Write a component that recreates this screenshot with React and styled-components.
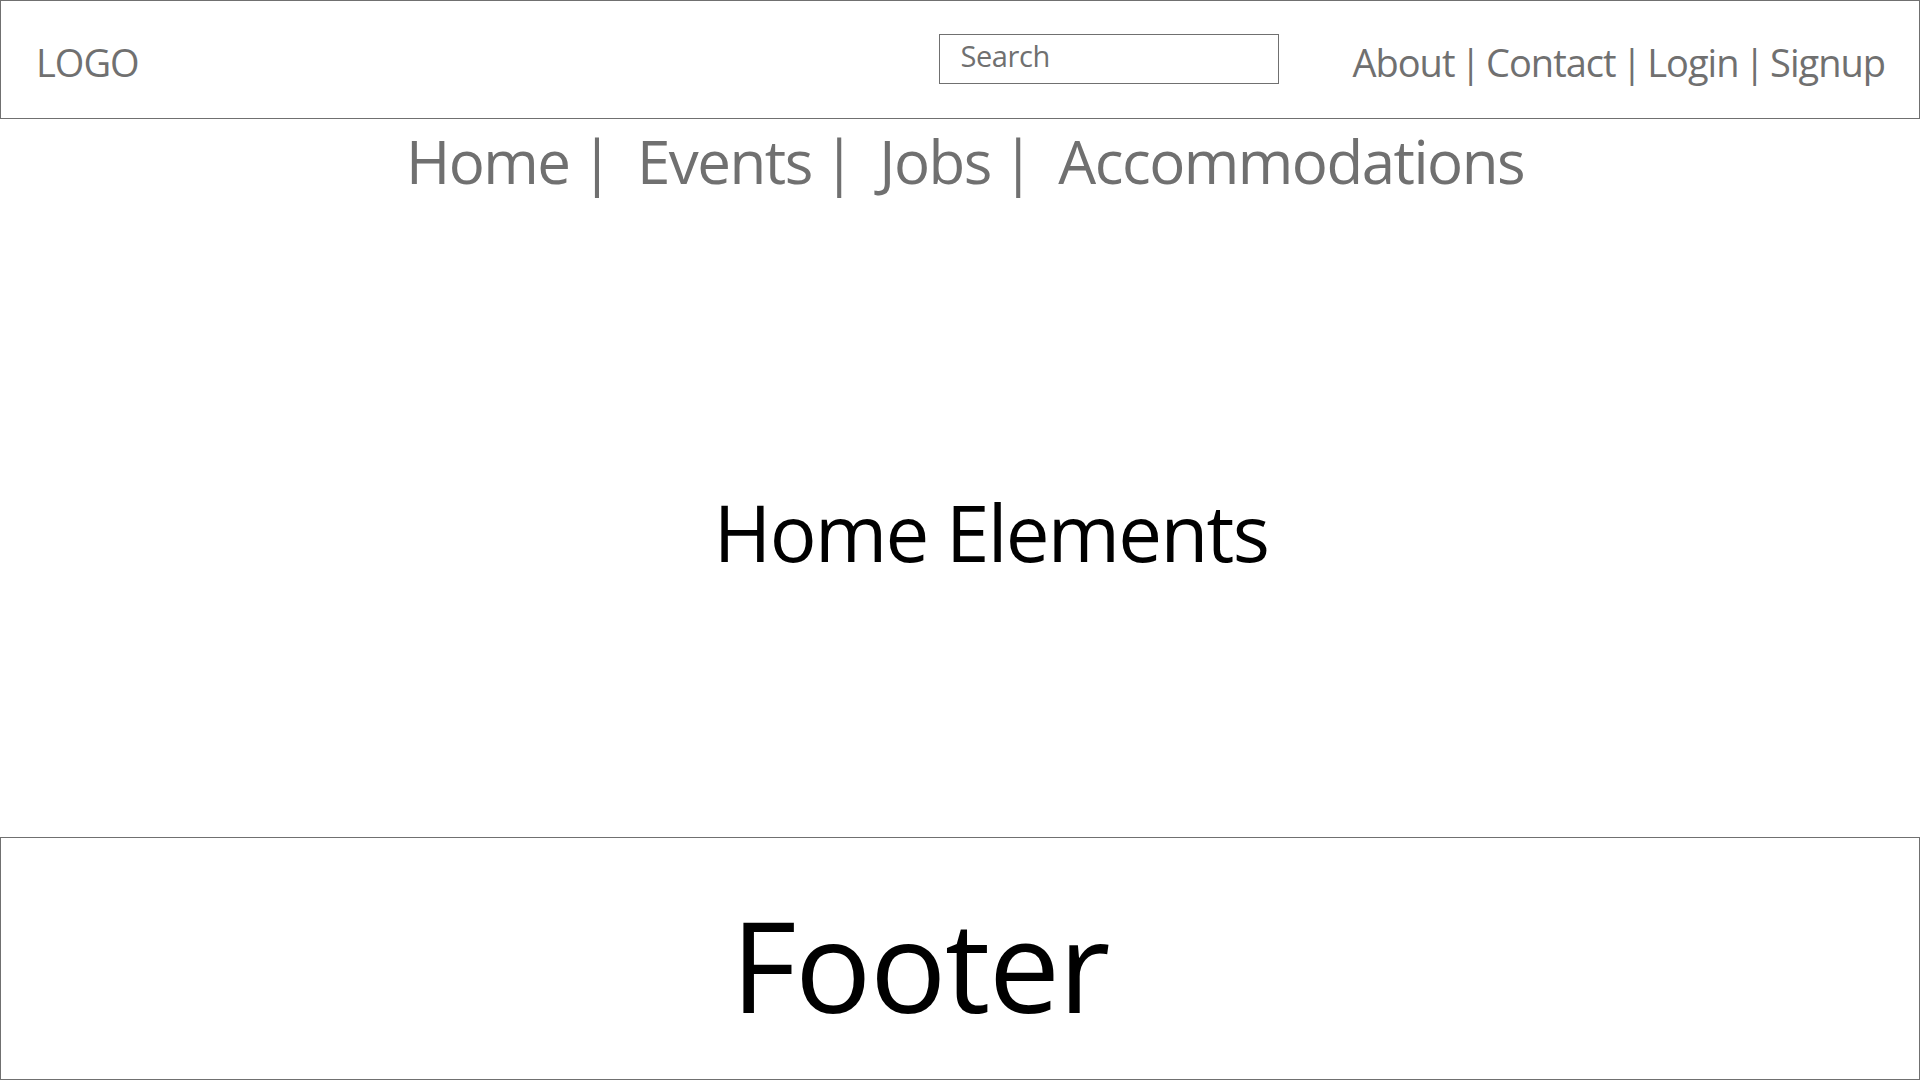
import React from 'react';
import styled, { createGlobalStyle } from 'styled-components';

const Global = createGlobalStyle`
  html, body { margin: 0; padding: 0; background: #ffffff; }
  body { font-family: "Open Sans", "Noto Sans", sans-serif; }
  * { box-sizing: border-box; }
`;

const Page = styled.div`
  width: 1920px;
  height: 1080px;
  display: flex;
  flex-direction: column;
  overflow: hidden;
  background: #ffffff;
`;

const Header = styled.header`
  flex-shrink: 0;
  height: 119px;
  border: 1px solid #707070;
  display: flex;
  align-items: center;
  padding: 0 34px 0 35px;
`;

const Logo = styled.div`
  font-size: 38px;
  color: #707070;
  letter-spacing: -1px;
  margin-top: 4px;
`;

const SearchInput = styled.input`
  margin-left: auto;
  margin-top: -1px;
  width: 340px;
  height: 50px;
  border: 1px solid #707070;
  border-radius: 0;
  padding: 0 20px 8px;
  font-family: inherit;
  font-size: 29px;
  letter-spacing: -0.4px;
  color: #707070;
  background: #ffffff;
  outline: none;
  &::placeholder { color: #707070; opacity: 1; }
`;

const TopLinks = styled.nav`
  margin-left: 73px;
  margin-top: 4px;
  display: flex;
  font-size: 38px;
  letter-spacing: -1px;
  color: #707070;
  white-space: pre;
`;

const TopLink = styled.span`
  color: #707070;
`;

const Sep = styled.span`
  color: #707070;
  margin: 0 -3px;
`;

const MainNav = styled.nav`
  flex-shrink: 0;
  display: flex;
  justify-content: center;
  gap: 25px;
  padding: 2px 0 0 10px;
  font-size: 60px;
  letter-spacing: -1.5px;
  line-height: 1.362;
  color: #707070;
  white-space: pre;
`;

const NavItem = styled.span`
  display: flex;
  color: #707070;
`;

const NavBar = styled.span`
  margin-left: 11px;
`;

const Main = styled.main`
  flex: 1;
  display: flex;
  align-items: center;
  justify-content: center;
  padding: 24px 0 0 62px;
`;

const Title = styled.h1`
  margin: 0;
  font-weight: 400;
  font-size: 78px;
  letter-spacing: -1.7px;
  color: #000000;
`;

const Footer = styled.footer`
  flex-shrink: 0;
  height: 243px;
  border: 1px solid #707070;
  display: flex;
  align-items: center;
  justify-content: center;
  padding-right: 80px;
`;

const FooterText = styled.div`
  font-size: 127px;
  letter-spacing: -1.5px;
  line-height: 1;
  color: #000000;
  margin-top: 10px;
`;

const topLinks = ['About', 'Contact', 'Login', 'Signup'];
const navItems = ['Home', 'Events', 'Jobs', 'Accommodations'];

export default function App() {
  return (
    <>
      <Global />
      <Page>
        <Header>
          <Logo>LOGO</Logo>
          <SearchInput placeholder="Search" />
          <TopLinks>
            {topLinks.map((l, i) => (
              <React.Fragment key={l}>
                <TopLink>{l}</TopLink>
                {i < topLinks.length - 1 && <Sep> | </Sep>}
              </React.Fragment>
            ))}
          </TopLinks>
        </Header>
        <MainNav>
          {navItems.map((n, i) => (
            <NavItem key={n}>
              {n}
              {i < navItems.length - 1 && <NavBar>|</NavBar>}
            </NavItem>
          ))}
        </MainNav>
        <Main>
          <Title>Home Elements</Title>
        </Main>
        <Footer>
          <FooterText>Footer</FooterText>
        </Footer>
      </Page>
    </>
  );
}
